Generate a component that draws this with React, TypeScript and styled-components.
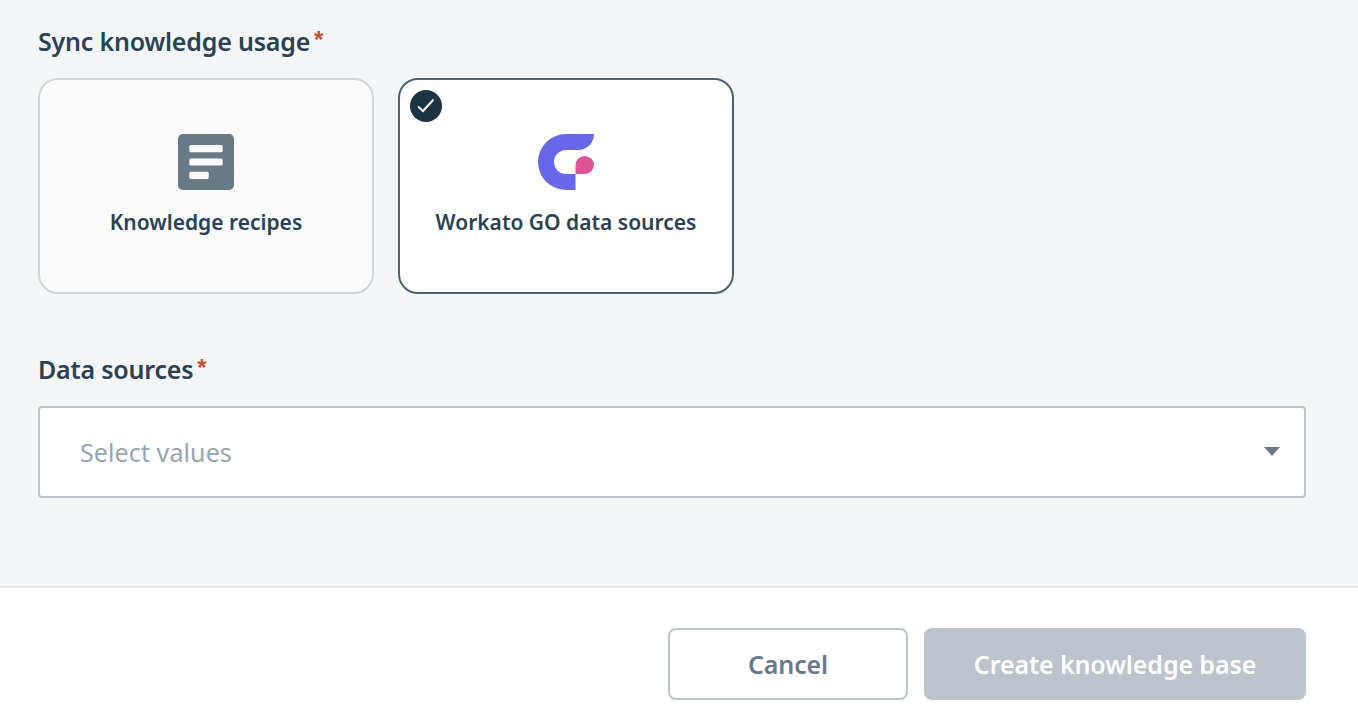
import React from 'react';
import styled, { createGlobalStyle } from 'styled-components';

const GlobalStyle = createGlobalStyle`
  html, body {
    margin: 0;
    padding: 0;
    background: #f3f5f7;
    font-family: "Noto Sans", "Open Sans", sans-serif;
  }
  * {
    box-sizing: border-box;
  }
`;

const Page = styled.div`
  display: flex;
  flex-direction: column;
  height: 724px;
  overflow: hidden;
`;

const Form = styled.main`
  flex: 1;
  padding: 23px 52px 0 38px;
`;

const Field = styled.section`
  margin-bottom: 57px;
`;

const Label = styled.div`
  display: flex;
  height: 36px;
  margin-bottom: 19px;
  align-items: center;
  font-size: 25px;
  font-weight: 600;
  letter-spacing: -0.2px;
  color: #2a4254;
`;

const Required = styled.span`
  margin: -3px 0 0 4px;
  font-family: "Liberation Sans", sans-serif;
  font-size: 24px;
  font-weight: 700;
  color: #cf4b2e;
`;

const Cards = styled.div`
  display: flex;
  gap: 24px;
`;

const Card = styled.div<{ $selected?: boolean }>`
  position: relative;
  display: flex;
  flex-direction: column;
  align-items: center;
  width: 336px;
  height: 216px;
  padding-top: 54px;
  border: 2px solid ${({ $selected }) => ($selected ? '#4c6173' : '#d0d5db')};
  border-radius: 20px;
  background: ${({ $selected }) => ($selected ? '#ffffff' : '#fafafa')};
`;

const CardTitle = styled.div`
  margin-top: 16px;
  font-size: 21px;
  line-height: 32px;
  font-weight: 600;
  letter-spacing: 0;
  color: #2a4254;
`;

const CheckBadge = styled.span`
  position: absolute;
  top: 10px;
  left: 10px;
  display: flex;
  align-items: center;
  justify-content: center;
  width: 32px;
  height: 32px;
  border-radius: 50%;
  background: #1c3342;
`;

const Select = styled.div`
  display: flex;
  align-items: center;
  justify-content: space-between;
  height: 92px;
  padding: 0 24px 0 40px;
  border: 2px solid #bcc3cc;
  border-radius: 4px;
  background: #ffffff;
`;

const Placeholder = styled.span`
  font-size: 25px;
  letter-spacing: 0.1px;
  color: #98a5b0;
`;

const Caret = styled.span`
  width: 0;
  height: 0;
  margin-top: -2px;
  border-left: 8px solid transparent;
  border-right: 8px solid transparent;
  border-top: 9px solid #67798a;
`;

const Footer = styled.footer`
  display: flex;
  justify-content: flex-end;
  gap: 16px;
  height: 138px;
  padding: 40px 52px 0 0;
  border-top: 2px solid #e4e7eb;
  background: #ffffff;
`;

const Button = styled.button<{ $primary?: boolean }>`
  width: ${({ $primary }) => ($primary ? '382px' : '240px')};
  height: 72px;
  border: 2px solid #bcc3cc;
  border-radius: 8px;
  background: ${({ $primary }) => ($primary ? '#bcc3cc' : '#ffffff')};
  color: ${({ $primary }) => ($primary ? '#ffffff' : '#67798a')};
  font-family: inherit;
  font-size: 25px;
  font-weight: 600;
  letter-spacing: -0.1px;
`;

const RecipesIcon = () => (
  <svg width="56" height="56" viewBox="0 0 56 56">
    <rect width="56" height="56" rx="5" fill="#697a87" />
    <rect x="11.3" y="11" width="33.4" height="7.2" rx="1.5" fill="#fafafa" />
    <rect x="11.3" y="24.4" width="33.4" height="7.2" rx="1.5" fill="#fafafa" />
    <rect x="11.3" y="37.8" width="19.4" height="7.2" rx="1.5" fill="#fafafa" />
  </svg>
);

const WorkatoGoLogo = () => (
  <svg width="56" height="56" viewBox="0 0 56 56">
    <path
      d="M56 0H28A28 28 0 0 0 28 56H37.5V40H28A12 12 0 0 1 28 16H40C49 16 56 9 56 0Z"
      fill="#6767e9"
    />
    <path d="M37.5 40V31A9 9 0 0 1 46.5 22H47A9 9 0 0 1 47 40Z" fill="#dd5596" />
  </svg>
);

const CheckMark = () => (
  <svg width="20" height="20" viewBox="0 0 20 20" fill="none">
    <path d="M2 10.5L7 15L17.5 3.5" stroke="#ffffff" strokeWidth="2" />
  </svg>
);

const App = () => {
  return (
    <Page>
      <GlobalStyle />
      <Form>
        <Field>
          <Label>
            Sync knowledge usage<Required>*</Required>
          </Label>
          <Cards>
            <Card>
              <RecipesIcon />
              <CardTitle>Knowledge recipes</CardTitle>
            </Card>
            <Card $selected>
              <CheckBadge>
                <CheckMark />
              </CheckBadge>
              <WorkatoGoLogo />
              <CardTitle>Workato GO data sources</CardTitle>
            </Card>
          </Cards>
        </Field>
        <Field>
          <Label>
            Data sources<Required>*</Required>
          </Label>
          <Select>
            <Placeholder>Select values</Placeholder>
            <Caret />
          </Select>
        </Field>
      </Form>
      <Footer>
        <Button>Cancel</Button>
        <Button $primary>Create knowledge base</Button>
      </Footer>
    </Page>
  );
};

export default App;
